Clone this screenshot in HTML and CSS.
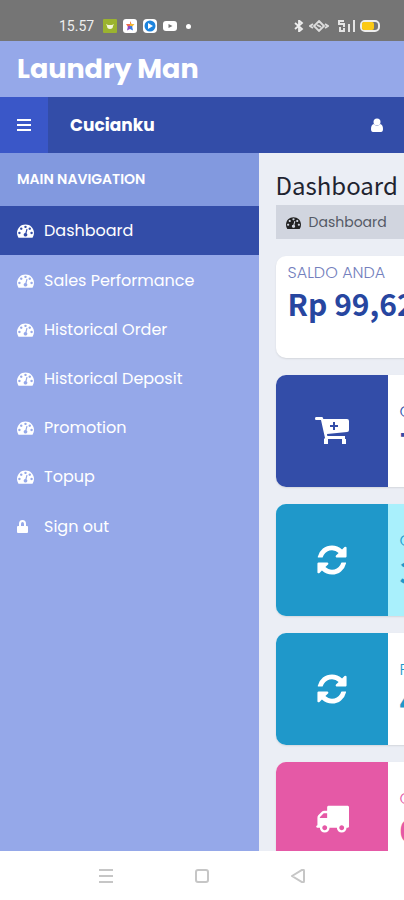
FILE: index.html
```html
<!DOCTYPE html>
<html lang="id">
<head>
    <meta charset="UTF-8">
    <meta name="viewport" content="width=device-width, initial-scale=1.0">
    <title>Laundry Man</title>
    <link rel="stylesheet" href="styles.css">
</head>
<body>
    <!-- Shared icons -->
    <svg class="sprite" aria-hidden="true">
        <symbol id="dashboard" viewBox="0 0 1792 1792">
            <path d="M384 1152q0-53-37.5-90.5t-90.5-37.5-90.5 37.5-37.5 90.5 37.5 90.5 90.5 37.5 90.5-37.5 37.5-90.5zm192-448q0-53-37.5-90.5t-90.5-37.5-90.5 37.5-37.5 90.5 37.5 90.5 90.5 37.5 90.5-37.5 37.5-90.5zm428 481l101-382q6-26-7.5-48.5t-38.5-29.5-48 6.5-30 39.5l-101 382q-60 5-107 43.5t-63 98.5q-20 77 20 146t117 89 146-20 89-117q16-60-6-117t-72-91zm660-33q0-53-37.5-90.5t-90.5-37.5-90.5 37.5-37.5 90.5 37.5 90.5 90.5 37.5 90.5-37.5 37.5-90.5zm-640-640q0-53-37.5-90.5t-90.5-37.5-90.5 37.5-37.5 90.5 37.5 90.5 90.5 37.5 90.5-37.5 37.5-90.5zm448 192q0-53-37.5-90.5t-90.5-37.5-90.5 37.5-37.5 90.5 37.5 90.5 90.5 37.5 90.5-37.5 37.5-90.5zm320 448q0 261-141 483-19 29-54 29h-1402q-35 0-54-29-141-221-141-483 0-182 71-348t191-286 286-191 348-71 348 71 286 191 191 286 71 348z"/>
        </symbol>
        <symbol id="refresh" viewBox="0 0 1792 1792">
            <path d="M1639 1056q0 5-1 7-64 268-268 434.5t-478 166.5q-146 0-282.5-55t-243.5-157l-129 129q-19 19-45 19t-45-19-19-45v-448q0-26 19-45t45-19h448q26 0 45 19t19 45-19 45l-137 137q71 66 161 102t187 36q134 0 250-65t186-179q11-17 53-117 8-23 30-23h192q13 0 22.5 9.5t9.5 22.5zm25-800v448q0 26-19 45t-45 19h-448q-26 0-45-19t-19-45 19-45l138-138q-148-137-349-137-134 0-250 65t-186 179q-11 17-53 117-8 23-30 23h-199q-13 0-22.5-9.5t-9.5-22.5v-7q65-268 270-434.5t480-166.5q146 0 284 55.5t245 156.5l130-129q19-19 45-19t45 19 19 45z"/>
        </symbol>
        <symbol id="truck" viewBox="0 0 1792 1792">
            <path d="M640 1408q0-52-38-90t-90-38-90 38-38 90 38 90 90 38 90-38 38-90zm-384-512h384v-256h-158q-13 0-22 9l-195 195q-9 9-9 22v30zm1280 512q0-52-38-90t-90-38-90 38-38 90 38 90 90 38 90-38 38-90zm256-1088v1024q0 15-4 26.5t-13.5 18.5-16.5 11.5-23.5 6-22.5 2-25.5 0-22.5-.5q0 106-75 181t-181 75-181-75-75-181h-384q0 106-75 181t-181 75-181-75-75-181h-64q-3 0-22.5.5t-25.5 0-22.5-2-23.5-6-16.5-11.5-13.5-18.5-4-26.5q0-26 19-45t45-19v-320q0-8-.5-35t0-38 2.5-34.5 6.5-37 14-30.5 22.5-30l198-198q19-19 50.5-32t58.5-13h160v-192q0-26 19-45t45-19h1024q26 0 45 19t19 45z"/>
        </symbol>
    </svg>

    <div class="status-bar">
        <span class="time">15.57</span>
        <svg width="14" height="14" viewBox="0 0 14 14">
            <rect width="14" height="14" rx="1" fill="#9bb32f"/>
            <path d="M3 5l2 1h4l2-1-1 2q0 3-3 3t-3-3z" fill="#f2f6dc"/>
        </svg>
        <svg width="14" height="14" viewBox="0 0 14 14">
            <rect width="14" height="14" rx="3" fill="#fff"/>
            <path d="M7 2l1.500 3H7z" fill="#e94b3c"/>
            <path d="M3 5h4v3H5z" fill="#ee6c4d"/>
            <path d="M7 3l1 2h3.500L9 8H7z" fill="#f2b632"/>
            <path d="M5 7h2v3l-3 1.500z" fill="#8a4bc2"/>
            <path d="M7 7h2l1 4.500L7 10z" fill="#3c7be0"/>
        </svg>
        <svg width="14" height="14" viewBox="0 0 14 14">
            <rect width="14" height="14" rx="4" fill="#fff"/>
            <circle cx="7" cy="7" r="5.500" fill="#1c84de"/>
            <path d="M5 4l5 3-5 3z" fill="#fff"/>
        </svg>
        <svg width="14" height="10" viewBox="0 0 14 10">
            <rect width="14" height="10" rx="3" fill="#fff"/>
            <path d="M5.500 3l4 2-4 2z" fill="#757575"/>
        </svg>
        <span class="dot"></span>
        <div class="status-right">
            <svg width="10" height="12" viewBox="0 0 10 12" fill="none" stroke="#eee" stroke-width="1.800">
                <path d="M1 3l7 6-3 2.500V.5L8 3 1 9"/>
            </svg>
            <svg width="20" height="12" viewBox="0 0 20 12" fill="none" stroke="#ddd" stroke-width="1.800">
                <path d="M10 1l5 5-5 5-5-5zM8 5l4 2M4 4L1 6l3 2M16 4l3 2-3 2"/>
            </svg>
            <svg class="signal" width="18" height="12" viewBox="0 0 18 12" fill="none" stroke="#e4e4e4" stroke-width="2">
                <path d="M7 1H2v3h5v3M3 7v4h4V8M12 12V4M17 12V0"/>
            </svg>
            <svg width="20" height="12" viewBox="0 0 20 12">
                <rect x="1" y="1" width="18" height="10" rx="4" fill="#757575" stroke="#eee" stroke-width="2"/>
                <rect x="2" y="2" width="12" height="8" rx="2" fill="#fbc916"/>
            </svg>
        </div>
    </div>

    <div class="app">
        <header>
            <a href="#" class="brand">Laundry Man</a>
            <nav class="navbar">
                <button class="toggle" aria-label="Menu">
                    <svg width="14" height="12" viewBox="0 0 14 12"><path d="M0 1h14M0 6h14M0 11h14" stroke="#fff" stroke-width="2"/></svg>
                </button>
                <span class="app-name">Cucianku</span>
                <a href="#" class="user" aria-label="Profil">
                    <svg width="12" height="14" viewBox="0 0 12 14" fill="#fff"><circle cx="6" cy="4" r="3.500"/><path d="M2.500 6Q6 9.500 9.500 6q2.500 1 2.500 5 0 3-2 3H2q-2 0-2-3 0-4 2.500-5z"/></svg>
                </a>
            </nav>
        </header>

        <div class="wrapper">
            <aside class="sidebar">
                <h2>MAIN NAVIGATION</h2>
                <ul>
                    <li><a href="#" class="active"><svg class="icon"><use href="#dashboard"/></svg>Dashboard</a></li>
                    <li><a href="#"><svg class="icon"><use href="#dashboard"/></svg>Sales Performance</a></li>
                    <li><a href="#"><svg class="icon"><use href="#dashboard"/></svg>Historical Order</a></li>
                    <li><a href="#"><svg class="icon"><use href="#dashboard"/></svg>Historical Deposit</a></li>
                    <li><a href="#"><svg class="icon"><use href="#dashboard"/></svg>Promotion</a></li>
                    <li><a href="#"><svg class="icon"><use href="#dashboard"/></svg>Topup</a></li>
                    <li class="sign-out"><a href="#"><svg class="icon" viewBox="0 0 17 17"><path d="M1 8h1V6q0-4 3.500-4T9 6v2h1q1 0 1 1v5q0 1-1 1H1q-1 0-1-1V9q0-1 1-1zm3 0h3V6q0-2-1.500-2T4 6z"/></svg>Sign out</a></li>
                </ul>
            </aside>

            <main class="content">
                <h1>Dashboard</h1>
                <div class="breadcrumb"><svg class="icon"><use href="#dashboard"/></svg>Dashboard</div>

                <section class="card balance">
                    <div class="label">SALDO ANDA</div>
                    <div class="value">Rp 99,62</div>
                </section>

                <section class="card info blue">
                    <div class="tile">
                        <svg viewBox="0 0 34 34">
                            <path fill-rule="evenodd" d="M1 3h6q1 0 1.300 2H32q2 0 2 2v9q0 2-2 2L12 20l.3 2H30v3h1v5h-4v-5H13v5H9v-5l1-1L6 6H1q-1 0-1-1.500T1 3zm17 5v3h-3v2h3v3h2v-3h3v-2h-3V8z"/>
                        </svg>
                    </div>
                    <div class="detail">
                        <div class="label">O</div>
                        <div class="value">7</div>
                    </div>
                </section>

                <section class="card info cyan highlight">
                    <div class="tile"><svg><use href="#refresh"/></svg></div>
                    <div class="detail">
                        <div class="label">O</div>
                        <div class="value">3</div>
                    </div>
                </section>

                <section class="card info cyan">
                    <div class="tile"><svg><use href="#refresh"/></svg></div>
                    <div class="detail">
                        <div class="label">P</div>
                        <div class="value">4</div>
                    </div>
                </section>

                <section class="card info pink">
                    <div class="tile"><svg><use href="#truck"/></svg></div>
                    <div class="detail">
                        <div class="label">O</div>
                        <div class="value">0</div>
                    </div>
                </section>
            </main>
        </div>
    </div>

    <nav class="system-nav">
        <button aria-label="Recent"><svg width="14" height="14" viewBox="0 0 14 14"><path d="M0 1h14M0 7h14M0 13h14"/></svg></button>
        <button aria-label="Home"><svg width="14" height="14" viewBox="0 0 14 14"><rect x="1" y="1" width="12" height="12" rx="2"/></svg></button>
        <button aria-label="Back"><svg width="14" height="14" viewBox="0 0 14 14"><path d="M1 7L11 1q2-1 2 1v10q0 2-2 1z"/></svg></button>
    </nav>
</body>
</html>
```
FILE: styles.css
```css
* {
    box-sizing: border-box;
}
body {
    margin: 0;
    height: 100vh;
    display: flex;
    flex-direction: column;
    overflow: hidden;
    background-color: #fff;
    font-family: Poppins, Inter, sans-serif;
    font-size: 16px;
}
a {
    color: inherit;
    text-decoration: none;
}
button {
    padding: 0;
    border: none;
    background: none;
    cursor: pointer;
}
svg {
    flex: none;
    display: block;
}
.sprite {
    position: absolute;
    width: 0;
    height: 0;
}
.icon {
    width: 17px;
    height: 17px;
    fill: currentColor;
}

/* Phone status bar */
.status-bar {
    flex: none;
    display: flex;
    align-items: center;
    gap: 6px;
    padding: 12px 24px 1px 59px;
    background-color: #757575;
    color: #eee;
}
.time {
    margin-right: 3px;
    font-family: Roboto, sans-serif;
    font-size: 14px;
    line-height: 28px;
}
.dot {
    width: 5px;
    height: 5px;
    margin-left: 3px;
    border-radius: 50%;
    background-color: #fff;
}
.status-right {
    display: flex;
    align-items: center;
    gap: 5px;
    margin-left: auto;
}
.signal {
    margin-left: 3px;
}

/* Header */
.app {
    flex: 1;
    min-height: 0;
    display: flex;
    flex-direction: column;
    background-color: #ebeef5;
}
.brand {
    display: block;
    padding: 0 17px;
    background-color: #95a8e9;
    color: #fff;
    font-size: 27px;
    font-weight: 700;
    line-height: 56px;
}
.navbar {
    display: flex;
    align-items: center;
    padding-right: 21px;
    background-color: #334da8;
    color: #fff;
}
.toggle {
    display: flex;
    align-items: center;
    justify-content: center;
    width: 48px;
    height: 56px;
    background-color: #3a57c8;
}
.app-name {
    margin-left: 22px;
    font-size: 17px;
    font-weight: 700;
}
.user {
    margin-left: auto;
}

/* Sidebar */
.wrapper {
    flex: 1;
    min-height: 0;
    display: flex;
    overflow: hidden;
}
.sidebar {
    flex: none;
    width: 64%;
    background-color: #95a8e9;
    color: #fff;
}
.sidebar h2 {
    margin: 0;
    padding: 0 17px;
    background-color: #8299df;
    font-size: 14px;
    font-weight: 600;
    line-height: 53px;
}
.sidebar ul {
    margin: 0;
    padding: 0;
    list-style: none;
}
.sidebar a {
    display: flex;
    align-items: center;
    gap: 10px;
    padding: 0 17px;
    line-height: 49px;
}
.sidebar .active {
    margin-bottom: 1px;
    background-color: #334da8;
}
.sidebar .sign-out {
    margin-top: 1px;
}

/* Content is pushed aside while the sidebar is open */
.content {
    flex: none;
    width: 100%;
    padding: 16px 17px 0;
}
.content h1 {
    margin: 0;
    color: #1f2430;
    font-family: "Noto Sans CJK SC", sans-serif;
    font-size: 24px;
    font-weight: 400;
    line-height: 32px;
}
.breadcrumb {
    display: flex;
    align-items: center;
    gap: 8px;
    margin: 4px 0 17px;
    padding: 0 10px;
    background-color: #d1d5df;
    color: #555a66;
    font-size: 14px;
    line-height: 34px;
}
.breadcrumb .icon {
    width: 15px;
    height: 15px;
    fill: #222;
}
.card {
    margin-bottom: 17px;
    border-radius: 10px;
    background-color: #fff;
    box-shadow: 0 1px 2px rgba(0,0,0,0.1);
    overflow: hidden;
}
.balance {
    min-height: 102px;
    padding: 6px 12px;
}
.label {
    font-size: 16px;
    font-weight: 300;
    line-height: 22px;
}
.value {
    font-family: "Noto Sans CJK SC", sans-serif;
    font-size: 30px;
    font-weight: 700;
    line-height: 38px;
}
.balance .label {
    color: #7480bd;
}
.balance .value {
    color: #2746a0;
}
.info {
    display: flex;
    min-height: 112px;
}
.tile {
    display: flex;
    align-items: center;
    justify-content: center;
    width: 112px;
}
.tile svg {
    width: 34px;
    height: 34px;
    fill: #fff;
}
.detail {
    flex: 1;
    padding: 26px 12px 0;
}
.blue {
    color: #334da8;
}
.blue .tile {
    background-color: #334da8;
}
.cyan {
    color: #1f98ca;
}
.cyan .tile {
    background-color: #1f98ca;
}
.pink {
    color: #e559a6;
}
.pink .tile {
    background-color: #e559a6;
}
.highlight {
    background-color: #a9f0fc;
}

/* Phone buttons */
.system-nav {
    flex: none;
    display: flex;
    align-items: center;
    justify-content: center;
    gap: 82px;
    height: 49px;
    background-color: #fff;
}
.system-nav svg {
    fill: none;
    stroke: #c6c6c6;
    stroke-width: 2;
}
```
